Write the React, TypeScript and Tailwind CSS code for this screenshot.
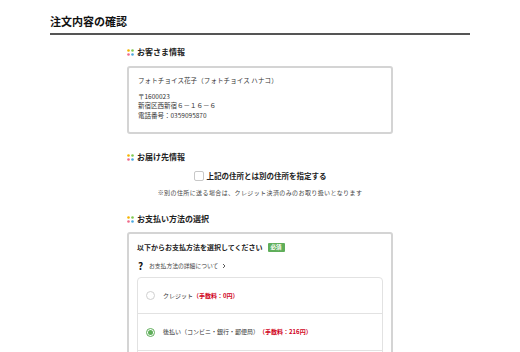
import React from "react";

const Dots = () => (
  <svg width="7" height="7" viewBox="0 0 7 7" className="shrink-0">
    <circle cx="1.5" cy="1.5" r="1.3" fill="#f5b400" />
    <circle cx="5.5" cy="1.5" r="1.3" fill="#7ec850" />
    <circle cx="1.5" cy="5.5" r="1.3" fill="#ef6a8a" />
    <circle cx="5.5" cy="5.5" r="1.3" fill="#4aa8e0" />
  </svg>
);

const Heading = ({ children }: { children: React.ReactNode }) => (
  <div className="flex items-center gap-[3px] h-[12px]">
    <Dots />
    <span className="text-[8px] font-bold text-[#222] leading-none">{children}</span>
  </div>
);

export default function App() {
  return (
    <div
      className="w-[520px] h-[352px] overflow-hidden bg-white text-[#333]"
      style={{ fontFamily: '"Noto Sans CJK JP", "Noto Sans", sans-serif' }}
    >
      <div className="px-[50px] pt-[14px]">
        <div className="h-[19px] flex items-start">
          <h1 className="text-[11px] font-bold leading-[14px] text-[#111]">注文内容の確認</h1>
        </div>
        <div className="h-[2px] bg-[#555]" />
      </div>

      <div className="w-[266px] mx-auto">
        <div className="pt-[11px]">
          <Heading>お客さま情報</Heading>
        </div>
        <div className="mt-[8px] h-[68px] rounded-[3px] border-2 border-[#d4d4d4] px-[9px] pt-[8px] text-[6.5px] leading-[9.5px] text-[#333]">
          <div className="tracking-[0.1px]">フォトチョイス花子（フォトチョイス ハナコ）</div>
          <div className="mt-[6px]">〒1600023</div>
          <div>新宿区西新宿６－１６－６</div>
          <div>電話番号：0359095870</div>
        </div>

        <div className="pt-[17px]">
          <Heading>お届け先情報</Heading>
        </div>
        <div className="mt-[7px] flex items-center justify-center gap-[3px] h-[12px]">
          <div className="w-[10px] h-[10px] rounded-[2px] border border-[#c8c8c8] bg-white" />
          <span className="text-[7.5px] font-bold text-[#222] leading-none">上記の住所とは別の住所を指定する</span>
        </div>
        <div className="mt-[7px] text-center text-[6px] tracking-[0.4px] text-[#444] leading-[8px]">
          ※別の住所に送る場合は、クレジット決済のみのお取り扱いとなります
        </div>

        <div className="pt-[16px]">
          <Heading>お支払い方法の選択</Heading>
        </div>
        <div className="mt-[7px] h-[140px] rounded-[3px] border-2 border-[#d4d4d4] px-[8px] pt-[8px]">
          <div className="flex items-center gap-[4px] h-[11px]">
            <span className="text-[7px] font-bold text-[#222] leading-none">以下からお支払方法を選択してください</span>
            <span className="ml-[1px] bg-[#5fae5a] text-white text-[5.5px] font-bold leading-none px-[3px] py-[2px] rounded-[1px]">必須</span>
          </div>
          <div className="mt-[8px] flex items-center h-[10px]">
            <span className="text-[10px] font-bold text-[#111] leading-none w-[12px] pl-[1px]">?</span>
            <span className="text-[5.8px] text-[#444] leading-none">お支払方法の詳細について</span>
            <svg width="6" height="6" viewBox="0 0 6 6" className="ml-[3px]">
              <path d="M2 1 L4 3 L2 5" fill="none" stroke="#333" strokeWidth="0.8" />
            </svg>
          </div>
          <div className="mt-[6px] rounded-[4px] border border-[#e2e2e2]">
            <div className="h-[36px] flex items-center pl-[8px] border-b border-[#e2e2e2]">
              <div className="w-[9px] h-[9px] rounded-full border border-[#d0d0d0] bg-white" />
              <span className="ml-[8px] text-[6px] text-[#333] leading-none">クレジット</span>
              <span className="text-[6px] font-bold text-[#d0021b] leading-none">（手数料：0円）</span>
            </div>
            <div className="h-[37px] flex items-center pl-[8px] border-b border-[#e2e2e2]">
              <div className="w-[9px] h-[9px] rounded-full border border-[#5fae5a] bg-white flex items-center justify-center">
                <div className="w-[5px] h-[5px] rounded-full bg-[#5fae5a]" />
              </div>
              <span className="ml-[8px] text-[6px] text-[#333] leading-none">後払い（コンビニ・銀行・郵便局）</span>
              <span className="text-[6px] font-bold text-[#d0021b] leading-none">（手数料：216円）</span>
            </div>
            <div className="h-[30px]" />
          </div>
        </div>
      </div>
    </div>
  );
}
